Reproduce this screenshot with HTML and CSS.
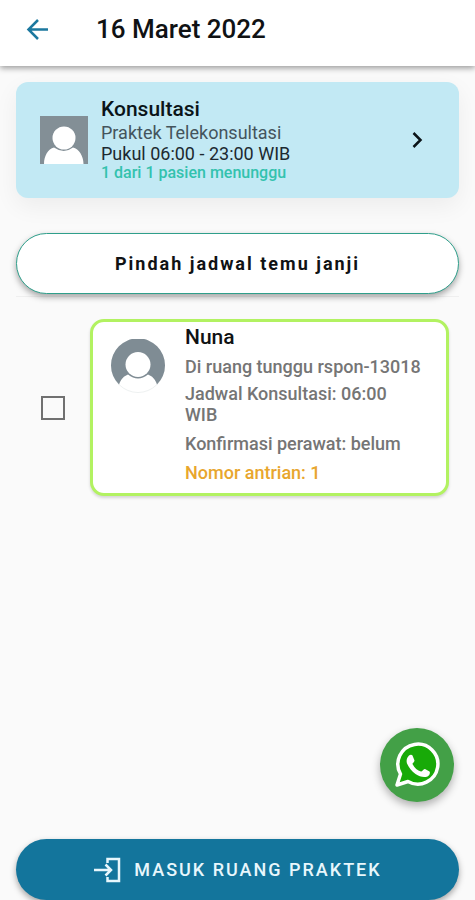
FILE: index.html
```html
<!DOCTYPE html>
<html lang="id">
<head>
<meta charset="utf-8">
<meta name="viewport" content="width=device-width, initial-scale=1">
<title>16 Maret 2022</title>
<link rel="stylesheet" href="styles.css">
</head>
<body>
<header class="app-bar">
  <button class="back" type="button" aria-label="Kembali">
    <svg width="24" height="24" viewBox="0 0 24 24" fill="none" stroke="currentColor" stroke-width="2.500"><path d="M22 11.500H3M12 2 2.500 11.500 12 21"/></svg>
  </button>
  <h1 class="title">16 Maret 2022</h1>
</header>
<main class="content">
  <a class="session" href="#sesi">
    <svg class="session-photo" width="48" height="48" viewBox="0 0 48 48"><path fill="#838f96" d="M0 0h48v48H0z"/><path fill="#fff" d="M4 48C4 40 8 33 14 31.500Q24 38.500 33 31.500C39 33 43.500 40 43.500 48z"/><circle cx="24" cy="22" r="11.500" fill="#fff"/></svg>
    <span class="session-text">
      <strong class="session-name">Konsultasi</strong>
      <span class="session-line muted">Praktek Telekonsultasi</span>
      <span class="session-line">Pukul 06:00 - 23:00 WIB</span>
      <span class="session-count">1 dari 1 pasien menunggu</span>
    </span>
    <svg class="chevron" width="16" height="20" viewBox="0 0 16 20" fill="none" stroke="currentColor" stroke-width="2.500"><path d="m4.500 3 7 7-7 7"/></svg>
  </a>
  <div class="reschedule-row">
    <button class="pill outline" type="button">Pindah jadwal temu janji</button>
  </div>
  <div class="patient-row">
    <input class="check" type="checkbox" aria-labelledby="nuna">
    <article class="patient">
      <svg class="patient-photo" width="54" height="54" viewBox="0 0 54 54"><circle cx="27" cy="27" r="26.500" fill="#fff" stroke="#eef1f1"/><path fill="#7f8c94" d="M8 45.500A27 27 0 1 1 46 45.500C44 40 41 37 37 35.500Q27 43.500 17 35.500C13 37 10 40 8 45.500z"/><circle cx="27" cy="25.500" r="12.500" fill="#fff"/></svg>
      <div class="patient-text">
        <h2 class="patient-name" id="nuna">Nuna</h2>
        <p class="detail">Di ruang tunggu rspon-13018</p>
        <p class="detail schedule">Jadwal Konsultasi: 06:00 WIB</p>
        <p class="detail">Konfirmasi perawat: belum</p>
        <p class="detail queue">Nomor antrian: 1</p>
      </div>
    </article>
  </div>
</main>
<footer class="bottom">
  <a class="fab" href="#whatsapp" aria-label="WhatsApp">
    <svg width="46" height="46" viewBox="0 0 46 46"><path fill="#18aa08" stroke="#fff" stroke-width="3.500" stroke-linejoin="round" d="m3 43 3.500-11A20 20 0 1 1 14 39.500z"/><path fill="#fff" d="M15 13.500c1-1 3-1 3.500 0l2 5c0 1.500-2 2.500-2 3.500 2 4 5 6.500 8.500 7.500 1.500 0 2.500-3 4-2.500l4.500 2.500c1 1 0 4-2 5-4 1.500-8 0-12-2.500-4-3-6.500-6.500-8.500-10.500-1-3 0-6 2-8z"/></svg>
  </a>
  <button class="pill primary" type="button">
    <svg width="28" height="26" viewBox="0 0 28 26" fill="none" stroke="currentColor" stroke-width="2.500"><path d="M1 13h17M12.500 7.500 18 13l-5.500 5.500M14.500 6V2H26v22H14.500v-4"/></svg>
    <span>MASUK RUANG PRAKTEK</span>
  </button>
</footer>
</body>
</html>
```
FILE: styles.css
```css
* { box-sizing: border-box; }
body {
  margin: 0;
  height: 100vh;
  display: flex;
  flex-direction: column;
  overflow: hidden;
  background: #fafafa;
  color: #101214;
  font-family: Roboto, "Liberation Sans", sans-serif;
}
h1, h2, p { margin: 0; }
button { font-family: inherit; cursor: pointer; }
svg { display: block; flex: none; }
.app-bar {
  display: flex;
  align-items: center;
  gap: 46px;
  padding: 13px 26px 20px;
  background: #fff;
  box-shadow: 0 2px 6px rgba(0, 0, 0, .4);
}
.back { padding: 0; border: 0; background: none; color: #1c789f; }
.title { font-size: 26px; line-height: 33px; font-weight: 500; }
.content { flex: 1; padding: 16px 16px 0; }
.session {
  display: flex;
  align-items: center;
  gap: 13px;
  padding: 15px 34px 16px 24px;
  border-radius: 12px;
  background: #c2e9f4;
  box-shadow: 0 8px 24px rgba(0, 0, 0, .06);
  color: #1c2930;
  text-decoration: none;
}
.session-text { flex: 1; display: flex; flex-direction: column; }
.session-name { font-size: 21px; line-height: 25px; font-weight: 500; color: #0b1418; }
.session-line { font-size: 18px; line-height: 21px; }
.muted { color: #44545c; }
.session-count { font-size: 16px; line-height: 18px; font-weight: 500; color: #33c2ae; }
.chevron { color: #0b1418; }
.reschedule-row { margin-top: 35px; padding-bottom: 2px; border-bottom: 1px solid #efefef; }
.pill {
  width: 100%;
  display: flex;
  align-items: center;
  justify-content: center;
  gap: 13px;
  min-height: 61px;
  border: 0;
  border-radius: 31px;
  font-size: 18px;
  line-height: 24px;
  box-shadow: 0 3px 6px rgba(0, 0, 0, .35);
}
.outline { border: 1px solid #2f9f8b; background: #fff; color: #101214; font-weight: 700; letter-spacing: 2px; }
.primary { background: #13759c; color: #e8f7fc; font-weight: 500; letter-spacing: 2px; }
.patient-row { display: flex; align-items: center; gap: 25px; margin-top: 22px; padding: 0 10px 0 25px; }
.check {
  appearance: none;
  flex: none;
  width: 24px;
  height: 24px;
  margin: 0;
  border: 2px solid #707070;
}
.check:checked { background: #13759c; }
.patient {
  flex: 1;
  display: flex;
  align-items: flex-start;
  gap: 20px;
  padding: 4px 16px 10px 18px;
  border: 3px solid #b2f261;
  border-radius: 14px;
  background: #fff;
  box-shadow: 0 2px 3px rgba(0, 0, 0, .15);
}
.patient-photo { margin-top: 13px; }
.patient-text { flex: 1; display: flex; flex-direction: column; gap: 8px; }
.patient-name { font-size: 21px; line-height: 22px; font-weight: 500; }
.detail { font-size: 18px; line-height: 21px; font-weight: 500; color: #757575; }
.schedule { margin-top: -2px; padding-right: 20px; }
.queue { color: #e8a62e; }
.bottom { position: relative; padding: 0 16px; }
.fab {
  position: absolute;
  right: 21px;
  bottom: 98px;
  width: 74px;
  height: 74px;
  display: flex;
  align-items: center;
  justify-content: center;
  border-radius: 50%;
  background: #43a047;
  box-shadow: 0 4px 8px rgba(0, 0, 0, .3);
}
```
